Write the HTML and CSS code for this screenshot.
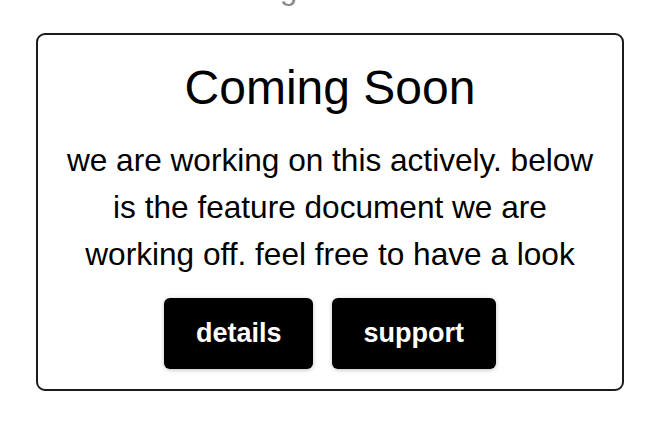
FILE: index.html
```html
<!DOCTYPE html>
<html>
<head>
<meta charset="utf-8">
<link rel="stylesheet" href="styles.css">
</head>
<body>
<div class="page">
  <div class="peek">nothing to see at all</div>
  <div class="card">
    <h1 class="title">Coming Soon</h1>
    <p class="desc">we are working on this actively. below is the feature document we are working off. feel free to have a look</p>
    <div class="actions">
      <button class="btn">details</button>
      <button class="btn">support</button>
    </div>
  </div>
</div>
</body>
</html>
```
FILE: styles.css
```css
html, body {
  margin: 0;
  padding: 0;
  background: #ffffff;
}
body {
  font-family: "Liberation Sans", Arial, Helvetica, sans-serif;
  color: #000;
  overflow: hidden;
}
.page {
  width: 660px;
  height: 434px;
  padding-left: 36px;
  box-sizing: border-box;
}
.peek {
  width: 588px;
  text-align: center;
  font-size: 31px;
  line-height: 36px;
  height: 36px;
  margin-top: -29px;
  color: #8a8a8a;
}
.card {
  margin-top: 26px;
  width: 588px;
  box-sizing: border-box;
  border: 2px solid #1c1c1c;
  border-radius: 9px;
  padding: 25px 20px 20px;
  text-align: center;
}
.title {
  margin: 0;
  font-size: 48px;
  font-weight: normal;
  line-height: 56px;
}
.desc {
  margin: 21px auto 0;
  max-width: 540px;
  font-size: 31.6px;
  line-height: 47px;
}
.actions {
  margin-top: 20px;
  display: flex;
  justify-content: center;
  gap: 19px;
}
.btn {
  background: #000;
  color: #fff;
  border: none;
  border-radius: 6px;
  font-family: "Liberation Sans", Arial, Helvetica, sans-serif;
  font-weight: bold;
  font-size: 27px;
  height: 71px;
  padding: 0 31.5px;
  box-shadow: 0 1px 4px rgba(0,0,0,0.25);
}
```
